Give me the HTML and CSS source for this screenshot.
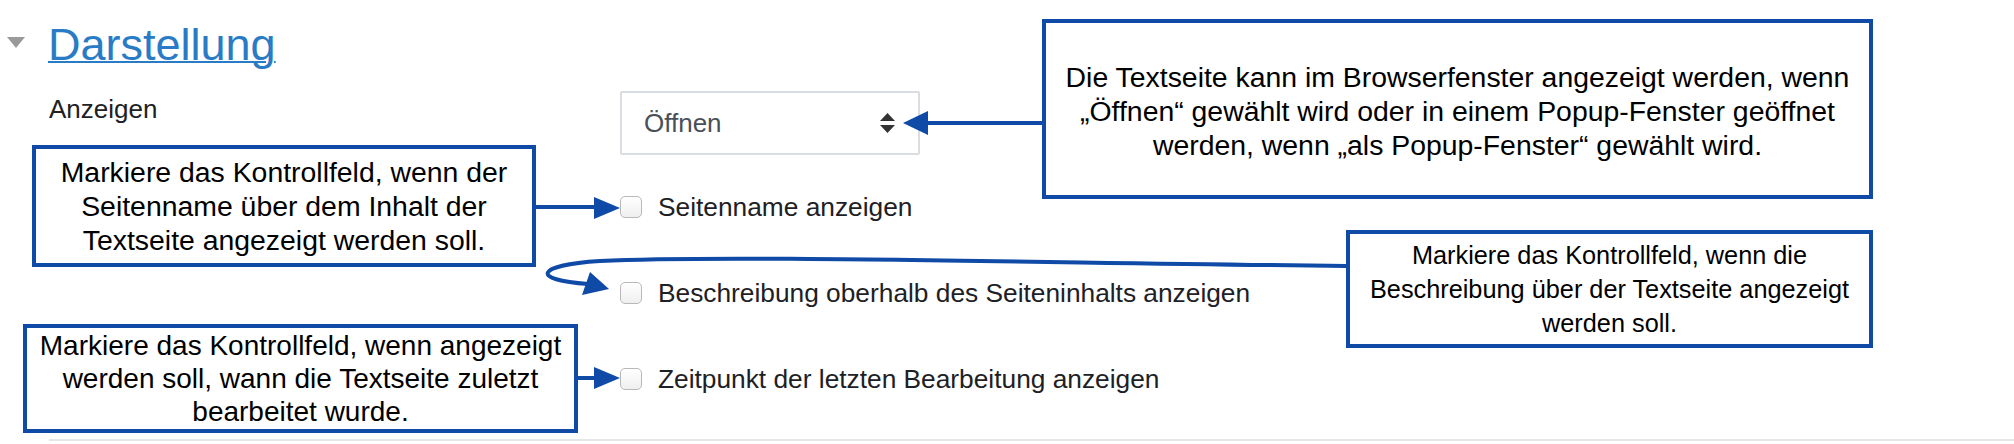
FILE: index.html
```html
<!DOCTYPE html>
<html lang="de">
<head>
<meta charset="utf-8"/>
<title>Darstellung</title>
<link rel="stylesheet" href="styles.css">
</head>
<body>
<div class="page">

  <div class="section">
    <div class="section-head">
      <span class="toggle"></span>
      <a href="#">Darstellung</a>
    </div>

    <div class="fitem row-select">
      <label class="fitem-label" for="display">Anzeigen</label>
      <div class="select" id="display">
        <span>Öffnen</span>
        <svg class="updown" width="15" height="20" viewBox="0 0 15 20">
          <polygon points="7.5,0 15,8 0,8" fill="#333"/>
          <polygon points="0,12 15,12 7.5,20" fill="#333"/>
        </svg>
      </div>
    </div>

    <div class="fitem row-check row-first">
      <div class="fitem-label"></div>
      <label class="check"><span class="box"></span>Seitenname anzeigen</label>
    </div>
    <div class="fitem row-check">
      <div class="fitem-label"></div>
      <label class="check"><span class="box"></span>Beschreibung oberhalb des Seiteninhalts anzeigen</label>
    </div>
    <div class="fitem row-check">
      <div class="fitem-label"></div>
      <label class="check"><span class="box"></span>Zeitpunkt der letzten Bearbeitung anzeigen</label>
    </div>
  </div>

  <!-- Hinweise -->
  <div class="note note-open">
    <p>Die Textseite kann im Browserfenster angezeigt werden, wenn<br>„Öffnen“ gewählt wird oder in einem Popup-Fenster geöffnet<br>werden, wenn „als Popup-Fenster“ gewählt wird.</p>
  </div>
  <div class="note note-title">
    <p>Markiere das Kontrollfeld, wenn der<br>Seitenname über dem Inhalt der<br>Textseite angezeigt werden soll.</p>
  </div>
  <div class="note note-desc">
    <p>Markiere das Kontrollfeld, wenn die<br>Beschreibung über der Textseite angezeigt<br>werden soll.</p>
  </div>
  <div class="note note-time">
    <p>Markiere das Kontrollfeld, wenn angezeigt<br>werden soll, wann die Textseite zuletzt<br>bearbeitet wurde.</p>
  </div>

  <svg class="arrows" width="2014" height="444" viewBox="0 0 2014 444">
    <g stroke="#0e4aa6" stroke-width="4" fill="none">
      <line x1="1042" y1="123" x2="922" y2="123"/>
      <line x1="536" y1="207" x2="598" y2="207"/>
      <path d="M1346 266 C 1000 262, 720 255, 600 261 C 535 265, 530 280, 588 284"/>
      <line x1="578" y1="378" x2="598" y2="378"/>
    </g>
    <g fill="#0e4aa6">
      <polygon points="903,123 928,111 928,135"/>
      <polygon points="620,208 594,197 594,219"/>
      <polygon points="609,289 582,295 590,272"/>
      <polygon points="620,378 594,367 594,389"/>
    </g>
  </svg>

</div>
</body>
</html>
```

FILE: styles.css
```css
body {
  margin: 0;
  background-color: #fff;
  font-family: "Liberation Sans", Arial, sans-serif;
}

.page {
  position: relative;
  width: 2014px;
  height: 444px;
  padding-top: 18px;
  box-sizing: border-box;
  overflow: hidden;
}

.section {
  margin-left: 49px;
  padding-bottom: 17px;
  border-bottom: 2px solid #e4e7ea;
}

.section-head {
  display: flex;
  align-items: center;
  height: 53px;
  margin-left: -42px;
}

.toggle {
  width: 0;
  height: 0;
  border-left: 9px solid transparent;
  border-right: 9px solid transparent;
  border-top: 11px solid #9a9a9a;
  margin-right: 23px;
  margin-top: -4px;
}

.section-head a {
  font-size: 45px;
  line-height: 53px;
  color: #2a7bc6;
  text-decoration: underline;
  text-decoration-thickness: 2px;
}

.fitem {
  display: flex;
}

.fitem-label {
  width: 571px;
  flex: none;
  font-size: 26px;
  line-height: 37px;
  color: #1d2125;
}

.row-select {
  margin-top: 20px;
  height: 64px;
}

.select {
  width: 300px;
  height: 64px;
  box-sizing: border-box;
  border: 2px solid #dadde1;
  border-radius: 2px;
  padding: 0 23px 0 22px;
  display: flex;
  align-items: center;
  justify-content: space-between;
  font-size: 26px;
  color: #495057;
}

.row-check {
  height: 86px;
  align-items: center;
}

.row-first {
  margin-top: 9px;
}

.check {
  display: flex;
  align-items: center;
  gap: 16px;
  font-size: 26.3px;
  color: #1d2125;
}

.box {
  width: 22px;
  height: 22px;
  box-sizing: border-box;
  border: 1.5px solid #b8b8b8;
  border-radius: 5px;
  background: linear-gradient(#fff, #efefef);
}

/* Hinweiskästen über dem Formular */
.note {
  position: absolute;
  box-sizing: border-box;
  border: 4px solid #0e4aa6;
  background-color: #fff;
  display: flex;
  align-items: center;
  justify-content: center;
  text-align: center;
  font-size: 28.4px;
  line-height: 34px;
  color: #000;
}

.note p {
  margin: 0;
}

.note-open {
  left: 1042px;
  top: 19px;
  width: 831px;
  height: 180px;
}

.note-open p {
  margin-top: 4px;
}

.note-title {
  left: 32px;
  top: 145px;
  width: 504px;
  height: 122px;
}

.note-desc {
  left: 1346px;
  top: 230px;
  width: 527px;
  height: 118px;
  font-size: 25.3px;
}

.note-time {
  left: 23px;
  top: 324px;
  width: 555px;
  height: 109px;
  font-size: 28px;
  line-height: 33px;
}

.arrows {
  position: absolute;
  left: 0;
  top: 0;
  pointer-events: none;
}
```
